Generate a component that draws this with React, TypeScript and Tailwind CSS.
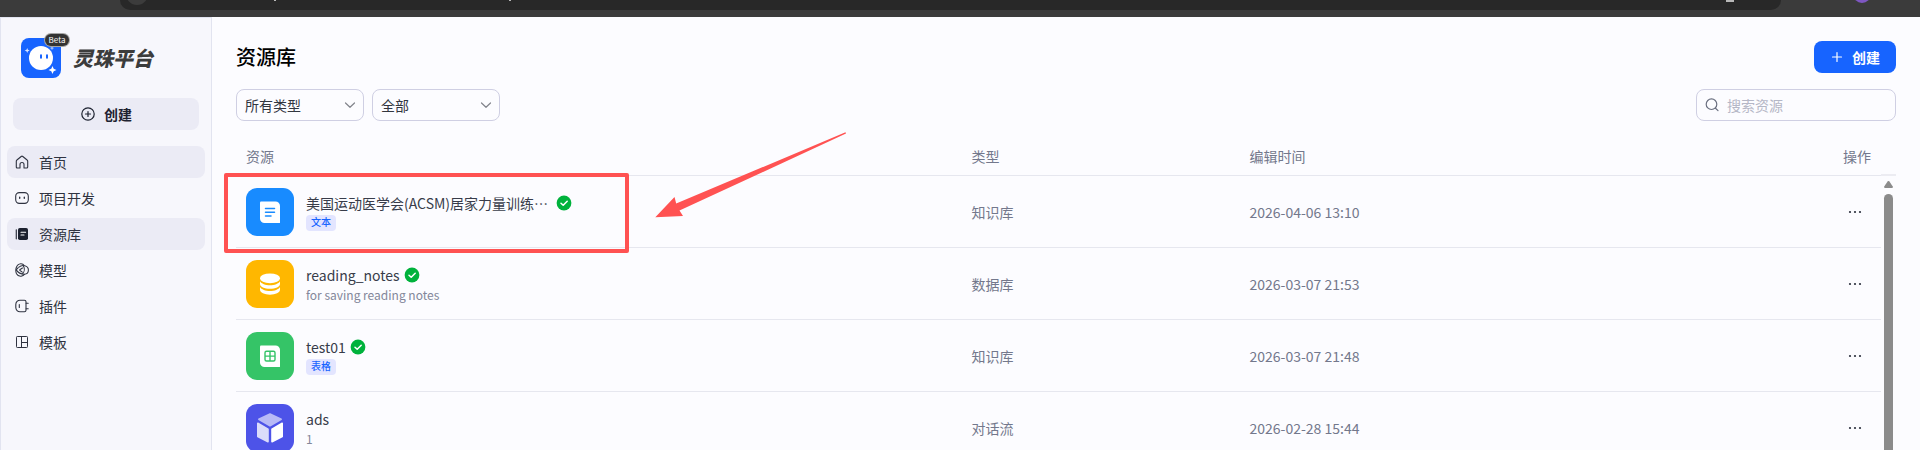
import React from "react";

const font = "font-['Noto_Sans_CJK_SC',sans-serif]";

function HomeIcon() {
  return (
    <svg viewBox="0 0 14 14" className="size-3.5" fill="none" stroke="currentColor" strokeWidth="1.1" strokeLinejoin="round" strokeLinecap="round">
      <path d="M5 13H2.4C1.7 13 1.3 12.6 1.3 12V6.2c0-.5.2-.9.6-1.2L6.2 1.5c.5-.4 1.1-.4 1.6 0L12.100 5c.4.3.6.7.6 1.2V12c0 .6-.4 1-1.100 1H9V9.500a2 2 0 0 0-4 0V13Z" />
    </svg>
  );
}
function BotIcon() {
  return (
    <svg viewBox="0 0 14 14" className="size-3.5" fill="none" stroke="currentColor" strokeWidth="1.1" strokeLinecap="round">
      <rect x="0.700" y="1.600" width="12.600" height="10.800" rx="3.600" />
      <path d="M4.700 6.300v1M9.300 6.300v1" strokeWidth="1.400" />
    </svg>
  );
}
function LibraryIcon() {
  return (
    <svg viewBox="0 0 14 14" className="size-3.5" fill="none">
      <path d="M1.300 2.800v9" stroke="currentColor" strokeWidth="1.200" strokeLinecap="round" />
      <rect x="3" y="1" width="10" height="12" rx="1.800" fill="#1d2230" />
      <path d="M6 5.200h4.600M6 8h3" stroke="#fff" strokeWidth="1.100" strokeLinecap="round" />
    </svg>
  );
}
function ModelIcon() {
  return (
    <svg viewBox="0 0 14 14" className="size-3.5" fill="none" stroke="currentColor" strokeWidth="1.05" strokeLinejoin="round">
      <path d="M9.200 2.600C8.400 1.200 7.100.6 5.700.7 3.500.9 2 2.400 1.300 4.500c-.7 2.200-.6 4.500.2 6.300.9 1.700 2.700 2.600 4.600 2.400 1.500-.2 2.700-.9 3.500-2.100" />
      <path d="M3.600 4.300c1.800-1.500 4-2.100 6.100-1.600 2.300.5 3.700 2.200 3.700 4.300 0 2.400-1.600 4.100-3.900 4.200-3.300.1-6.400-1.500-8.300-4.300" />
      <path d="M1.200 7c.6-1 1.400-1.900 2.400-2.700M8.300 2.700c1.500 2.600 1.300 6.200-.9 8.300M4.400 7l3.400-2.200M4.400 7l3.200 2.400" />
    </svg>
  );
}
function PluginIcon() {
  return (
    <svg viewBox="0 0 14 14" className="size-3.5" fill="none" stroke="currentColor" strokeWidth="1.100" strokeLinecap="round">
      <path d="M5 1.200h4.400c.9 0 1.600.7 1.600 1.600v8.400c0 .9-.7 1.600-1.600 1.600H5A4.200 4.200 0 0 1 .8 8.600V5.400A4.200 4.200 0 0 1 5 1.200Z" />
      <path d="M11.200 4.200h2M11.200 9.800h2M4.300 5.500v3" />
    </svg>
  );
}
function TemplateIcon() {
  return (
    <svg viewBox="0 0 14 14" className="size-3.5" fill="none" stroke="currentColor" strokeWidth="1">
      <rect x="1.500" y="1.500" width="11" height="11" rx="0.800" />
      <path d="M6.500 1.500v11M6.500 7.500h6" />
    </svg>
  );
}

const nav = [
  { label: "首页", icon: <HomeIcon />, on: true },
  { label: "项目开发", icon: <BotIcon />, on: false },
  { label: "资源库", icon: <LibraryIcon />, on: true },
  { label: "模型", icon: <ModelIcon />, on: false },
  { label: "插件", icon: <PluginIcon />, on: false },
  { label: "模板", icon: <TemplateIcon />, on: false },
];

function Logo() {
  return (
    <svg viewBox="0 0 40 40" className="size-10">
      <rect width="40" height="40" rx="8" fill="#1764ff" />
      <circle cx="20" cy="20" r="12" fill="#fff" />
      <rect x="19" y="16.200" width="2" height="4.600" rx="1" fill="#1764ff" />
      <rect x="25" y="16.200" width="2" height="4.600" rx="1" fill="#1764ff" />
      <path d="M31.500 28l1.200 2.800 2.800 1.200-2.800 1.200-1.200 2.800-1.200-2.800-2.800-1.200 2.800-1.200Z" fill="#fff" />
      <path d="M6.200 10l.7 1.800 1.800.7-1.800.7-.7 1.800-.7-1.800-1.800-.7 1.800-.7Z" fill="#dbe7ff" />
      <path d="M31 8l.7 1.500 1.500.5-1.500.7L31 12.200l-.7-1.500-1.500-.7 1.500-.5Z" fill="#a9c6ff" />
    </svg>
  );
}

function DocIcon() {
  return (
    <svg viewBox="0 0 48 48" className="size-12 shrink-0">
      <rect width="48" height="48" rx="11" fill="#188bff" />
      <path d="M15 13.500h14.500a4.500 4.500 0 0 1 4.500 4.500v16.500a.5.500 0 0 1-.5.500H18.500a4.500 4.500 0 0 1-4.500-4.500V14.500a1 1 0 0 1 1-1Z" fill="#fff" />
      <path d="M19.500 20.500h9M19.500 24.300h9M19.500 28h5.500" stroke="#188bff" strokeWidth="1.500" strokeLinecap="round" />
    </svg>
  );
}
function DatabaseIcon() {
  return (
    <svg viewBox="0 0 48 48" className="size-12 shrink-0">
      <rect width="48" height="48" rx="11" fill="#ffb700" />
      <ellipse cx="24" cy="18.300" rx="10" ry="4.900" fill="#fff" />
      <path d="M14 21.300c1.500 2.500 5.400 4 10 4s8.500-1.500 10-4v2.600c0 2.700-4.500 4.900-10 4.900s-10-2.200-10-4.900Z" fill="#fff" />
      <path d="M14 27c1.500 2.500 5.400 4 10 4s8.500-1.500 10-4v2.800c0 2.700-4.500 4.900-10 4.900s-10-2.200-10-4.900Z" fill="#fff" />
    </svg>
  );
}
function SheetIcon() {
  return (
    <svg viewBox="0 0 48 48" className="size-12 shrink-0">
      <rect width="48" height="48" rx="11" fill="#35c467" />
      <path d="M15 13.500h14.500a4.500 4.500 0 0 1 4.500 4.500v16.500a.5.500 0 0 1-.5.500H18.500a4.500 4.500 0 0 1-4.500-4.500V14.500a1 1 0 0 1 1-1Z" fill="#fff" />
      <rect x="19" y="19.200" width="10" height="9.800" rx="1.500" fill="none" stroke="#35c467" strokeWidth="1.400" />
      <path d="M24 19.200V29M19 24.100h10" stroke="#35c467" strokeWidth="1.400" />
    </svg>
  );
}
function CubeIcon() {
  return (
    <svg viewBox="0 0 48 48" className="size-12 shrink-0">
      <rect width="48" height="48" rx="11" fill="#4d53e8" />
      <g strokeWidth="1.600" strokeLinejoin="round">
        <path d="M24 10l11.200 5.200L24 21.800l-11.200-6.600Z" fill="#b8baf6" stroke="#b8baf6" />
        <path d="M11.800 19.300L22 25.200V37.800L11.800 32.500Z" fill="#dbdcfa" stroke="#dbdcfa" />
        <path d="M36.200 19.300L26 25.200V37.800L36.200 32.500Z" fill="#fff" stroke="#fff" />
      </g>
    </svg>
  );
}

const rows = [
  { icon: <DocIcon />, name: "美国运动医学会(ACSM)居家力量训练…", ok: true, tag: "文本", desc: "", kind: "知识库", time: "2026-04-06 13:10", marked: true },
  { icon: <DatabaseIcon />, name: "reading_notes", ok: true, tag: "", desc: "for saving reading notes", kind: "数据库", time: "2026-03-07 21:53", marked: false },
  { icon: <SheetIcon />, name: "test01", ok: true, tag: "表格", desc: "", kind: "知识库", time: "2026-03-07 21:48", marked: false },
  { icon: <CubeIcon />, name: "ads", ok: false, tag: "", desc: "1", kind: "对话流", time: "2026-02-28 15:44", marked: false },
];

function Check() {
  return (
    <svg viewBox="0 0 16 16" className="size-4 shrink-0">
      <circle cx="8" cy="8" r="7.400" fill="#00b23c" />
      <path d="M5 8.200l2.200 2.100L11.200 6.200" fill="none" stroke="#fff" strokeWidth="1.500" strokeLinecap="round" strokeLinejoin="round" />
    </svg>
  );
}

function Filter({ label, options }: { label: string; options: string[] }) {
  return (
    <div className="relative">
      <select aria-label={label} className="block h-8 w-32 appearance-none rounded-lg border border-[#cfcfe3] bg-transparent px-2 text-sm text-[#32363f]">
        {options.map((o) => (
          <option key={o}>{o}</option>
        ))}
      </select>
      <svg viewBox="0 0 12 12" className="pointer-events-none absolute top-2.5 right-2 size-3" fill="none" stroke="#82848c" strokeWidth="1.200" strokeLinecap="round" strokeLinejoin="round">
        <path d="M1.500 4L6 8.300 10.500 4" />
      </svg>
    </div>
  );
}

export default function App() {
  return (
    <div className={`flex h-screen flex-col overflow-hidden bg-[#fcfcff] text-sm ${font}`}>
      <div className="h-[17px] shrink-0 bg-[#3b3b3b] pr-[139px] pl-[120px]">
        <div className="relative h-2.5 rounded-b-[14px] bg-[#282828]">
          <svg viewBox="0 0 30 10" className="absolute top-0 left-0 h-2.5 w-[30px]">
            <circle cx="17" cy="-6" r="11" fill="#3c3c3c" />
          </svg>
          <span className="absolute top-0 left-[154px] h-px w-0.5 bg-[#b8b8b8]" />
          <span className="absolute top-0 left-[389px] h-px w-0.5 bg-[#b8b8b8]" />
          <span className="absolute top-0 right-[47px] h-0.5 w-2 bg-[#b8b8b8]" />
          <svg viewBox="0 0 16 4" className="absolute top-0 -right-[89px] h-1 w-4">
            <circle cx="8" cy="-6" r="9" fill="#7e57c2" />
          </svg>
        </div>
      </div>

      <div className="flex min-h-0 flex-1">
        <aside className="flex w-[212px] shrink-0 flex-col border border-b-0 border-[#e2e4f0] bg-[#f7f7fc]">
          <div className="mt-5 ml-5 flex items-center gap-3">
            <div className="relative">
              <Logo />
              <span className="absolute -top-1 left-6 flex h-3 w-6 items-center justify-center rounded-full bg-[#333] text-[8px] text-white ring-1 ring-[#a5a5a5]">
                Beta
              </span>
            </div>
            <span className="text-xl font-black text-[#3c3c3c] italic">灵珠平台</span>
          </div>
          <button className="mx-3 mt-5 flex h-8 shrink-0 items-center justify-center gap-2 rounded-lg bg-[#ebebf5] font-semibold text-[#1d2230]">
            <svg viewBox="0 0 16 16" className="size-4" fill="none" stroke="currentColor" strokeWidth="1.200" strokeLinecap="round">
              <circle cx="8" cy="8" r="6.200" />
              <path d="M8 5.500v5M5.500 8h5" />
            </svg>
            创建
          </button>
          <nav className="mx-1.5 mt-4 flex flex-col gap-1">
            {nav.map((n) => (
              <a
                key={n.label}
                href="#"
                className={`flex h-8 items-center gap-2.5 rounded-lg px-2 text-[#2f3340] ${n.on ? "bg-[#ebebf5]" : ""}`}
              >
                {n.icon}
                {n.label}
              </a>
            ))}
          </nav>
        </aside>

        <main className="flex min-w-0 flex-1 flex-col px-6 pt-6">
          <header className="flex shrink-0 items-center justify-between">
            <h1 className="text-xl font-medium text-black">资源库</h1>
            <button className="flex h-8 items-center gap-2 rounded-lg bg-[#1764ff] px-4 font-semibold text-white">
              <svg viewBox="0 0 14 14" className="size-3.5" fill="none" stroke="currentColor" strokeWidth="1.200" strokeLinecap="round">
                <path d="M7 2.500v9M2.500 7h9" />
              </svg>
              创建
            </button>
          </header>

          <div className="mt-4 flex shrink-0 items-center justify-between">
            <div className="flex gap-2">
              <Filter label="类型" options={["所有类型", "知识库", "数据库", "对话流"]} />
              <Filter label="范围" options={["全部"]} />
            </div>
            <label className="flex h-8 w-50 items-center gap-2 rounded-lg border border-[#cfcfe3] px-2">
              <svg viewBox="0 0 14 14" className="size-3.5 shrink-0" fill="none" stroke="#6b7080" strokeWidth="1.200" strokeLinecap="round">
                <circle cx="6.500" cy="6.200" r="5.300" />
                <path d="M10.500 10.200L13 12.600" />
              </svg>
              <input aria-label="搜索资源" placeholder="搜索资源" className="w-full min-w-0 bg-transparent outline-none placeholder:text-[#b5b7c6]" />
            </label>
          </div>

          <div className="mt-[17px] flex min-h-0 flex-1">
            <div className="min-w-0 flex-1">
              <table className="w-full table-fixed border-separate border-spacing-0 text-left text-[#73788c]">
                <thead>
                  <tr className="h-[38px]">
                    <th className="w-[44.1%] border-b border-[#e6e7ef] px-2.5 pb-0.5 font-normal">资源</th>
                    <th className="w-[16.9%] border-b border-[#e6e7ef] px-2.5 pb-0.5 font-normal">类型</th>
                    <th className="border-b border-[#e6e7ef] px-2.5 pb-0.5 font-normal">编辑时间</th>
                    <th className="w-12 border-b border-[#e6e7ef] px-2.5 pb-0.5 font-normal">操作</th>
                  </tr>
                </thead>
                <tbody>
                  {rows.map((r) => (
                    <tr key={r.name} className="h-18">
                      <td className="relative border-b border-[#e6e7ef] px-2.5">
                        <div className="flex items-center gap-3">
                          {r.icon}
                          <div className="flex flex-col items-start gap-0.5">
                            <div className="flex items-center gap-1 leading-5 text-[#383c4a]">
                              <span className={r.marked ? "w-[246px]" : ""}>{r.name}</span>
                              {r.ok && <Check />}
                            </div>
                            {r.tag ? (
                              <span className="flex h-4 items-center rounded bg-[#e3e5ff] px-[5px] text-[10px] font-medium text-[#1764ff]">{r.tag}</span>
                            ) : (
                              <span className="text-xs leading-4 text-[#83879a]">{r.desc}</span>
                            )}
                          </div>
                        </div>
                        {r.marked && (
                          <>
                            <div className="pointer-events-none absolute -top-[3px] -left-3 h-20 w-[405px] rounded-xs border-4 border-[#ff5252]" />
                            <svg viewBox="0 0 192 86" className="pointer-events-none absolute -top-11 left-[419px] h-[86px] w-48">
                              <path d="M190.500.3L191 1.600 24.500 78.500 28 84 .3 85.300 19.500 65 21.200 71.500Z" fill="#ff5252" />
                            </svg>
                          </>
                        )}
                      </td>
                      <td className="border-b border-[#e6e7ef] px-2.5">{r.kind}</td>
                      <td className="border-b border-[#e6e7ef] px-2.5">{r.time}</td>
                      <td className="border-b border-[#e6e7ef] px-2.5">
                        <button aria-label="更多" className="flex w-6 items-center justify-center">
                          <svg viewBox="0 0 14 4" className="h-1 w-3.5" fill="#2a2e3c">
                            <circle cx="2" cy="2" r="1.100" />
                            <circle cx="7" cy="2" r="1.100" />
                            <circle cx="12" cy="2" r="1.100" />
                          </svg>
                        </button>
                      </td>
                    </tr>
                  ))}
                </tbody>
              </table>
            </div>
            <div className="flex w-[15px] shrink-0 flex-col items-center">
              <div className="h-[38px] w-full shrink-0 border-b-2 border-[#ececf2]" />
              <svg viewBox="0 0 9 7" className="mt-[5px] h-[7px] w-[9px] shrink-0" fill="#8b8b8b">
                <path d="M3.600.6a1.100 1.100 0 0 1 1.800 0L8.800 5.500C9.200 6.200 8.800 7 8 7H1C.2 7-.2 6.200.2 5.500Z" />
              </svg>
              <div className="mt-1.5 w-[9px] flex-1 rounded-t-full bg-[#8b8b8b]" />
            </div>
          </div>
        </main>
      </div>
    </div>
  );
}
